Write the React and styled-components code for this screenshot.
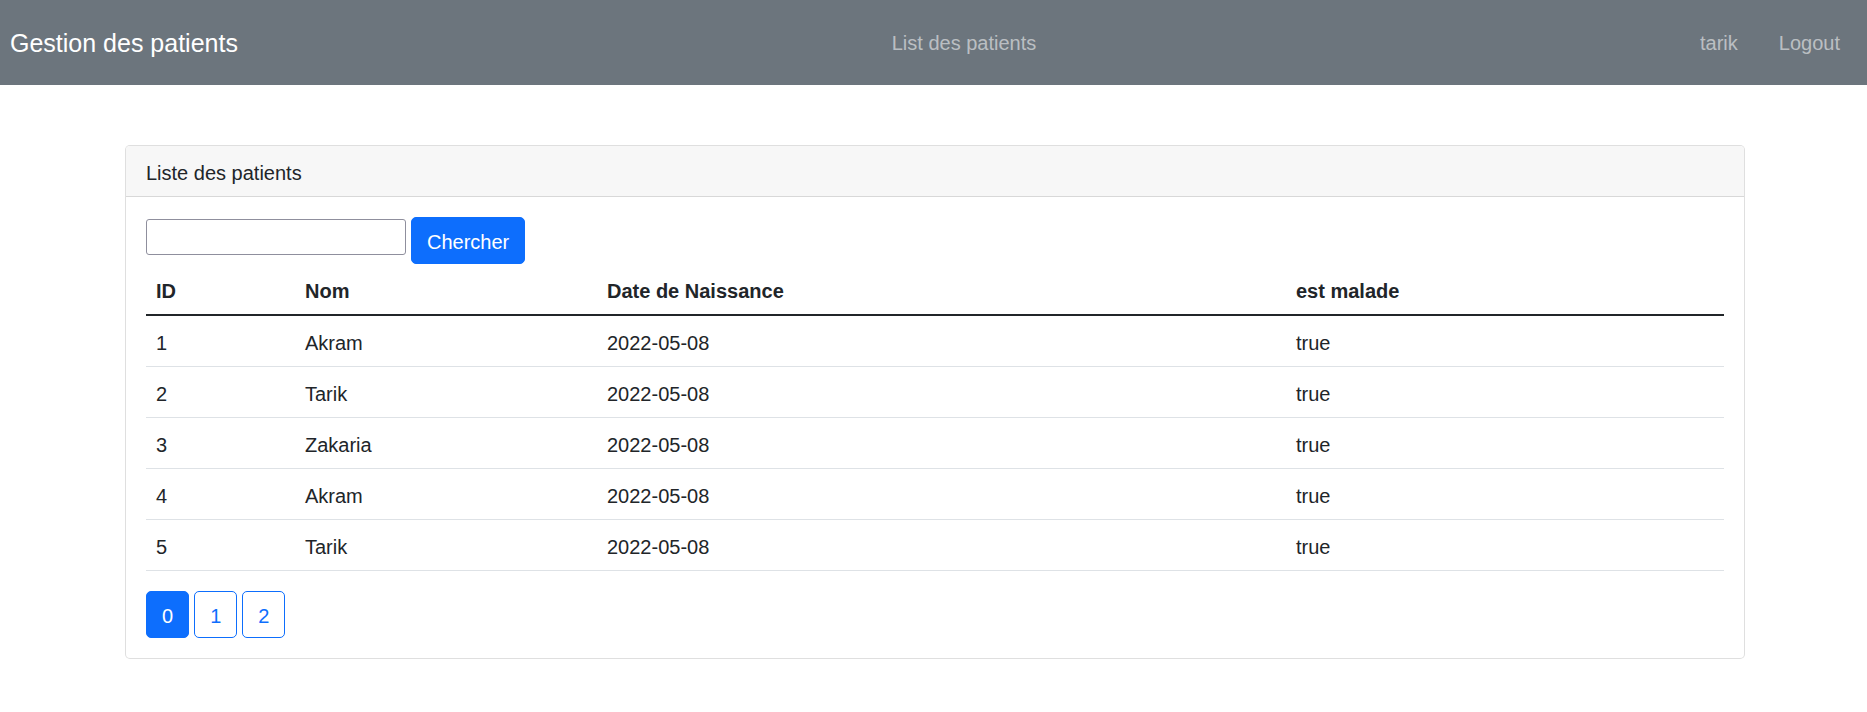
import React, { useState } from 'react'
import styled, { createGlobalStyle } from 'styled-components'

const GlobalStyle = createGlobalStyle`
  html, body {
    margin: 0;
    padding: 0;
    background: #fff;
  }
  body {
    font-family: 'Liberation Sans', Arial, sans-serif;
    font-size: 20px;
    line-height: 30px;
    color: #212529;
  }
  * {
    box-sizing: border-box;
  }
`

const patients = [
  { id: 1, nom: 'Akram', dateNaissance: '2022-05-08', malade: true },
  { id: 2, nom: 'Tarik', dateNaissance: '2022-05-08', malade: true },
  { id: 3, nom: 'Zakaria', dateNaissance: '2022-05-08', malade: true },
  { id: 4, nom: 'Akram', dateNaissance: '2022-05-08', malade: true },
  { id: 5, nom: 'Tarik', dateNaissance: '2022-05-08', malade: true }
]

const pages = [0, 1, 2]

const Navbar = styled.nav`
  display: flex;
  align-items: center;
  height: 85px;
  padding: 0 17px 0 10px;
  background-color: #6c757d;
`

const Brand = styled.a`
  font-size: 25px;
  line-height: 36px;
  color: #fff;
  text-decoration: none;
  white-space: nowrap;
`

const NavList = styled.ul`
  display: flex;
  gap: 21px;
  list-style: none;
  margin: 0 0 0 auto;
  padding: 0;
`

const NavLink = styled.a`
  display: block;
  padding: 0 10px;
  font-size: 20px;
  line-height: 30px;
  color: rgba(255, 255, 255, 0.55);
  text-decoration: none;
  cursor: pointer;
`

const Container = styled.div`
  width: 1620px;
  margin: 60px 122px 0 125px;
`

const Card = styled.div`
  border: 1px solid rgba(0, 0, 0, 0.125);
  border-radius: 5px;
  background: #fff;
  overflow: hidden;
`

const CardHeader = styled.div`
  padding: 12px 20px 8px;
  line-height: 30px;
  background-color: #f7f7f7;
  border-bottom: 1px solid rgba(0, 0, 0, 0.125);
`

const CardBody = styled.div`
  padding: 20px;
`

const SearchForm = styled.form`
  display: flex;
  align-items: flex-start;
  gap: 5px;
`

const SearchInput = styled.input`
  width: 260px;
  height: 36px;
  margin-top: 2px;
  padding: 2px 4px;
  border: 1px solid #8f8f9d;
  border-radius: 3px;
  font-family: inherit;
  font-size: 16px;
  outline: none;
`

const Button = styled.button`
  height: 47px;
  padding: 9px 15px 6px;
  border: 1px solid #0d6efd;
  border-radius: 5px;
  font-family: inherit;
  font-size: 20px;
  line-height: 30px;
  color: ${p => (p.$outline ? '#0d6efd' : '#fff')};
  background-color: ${p => (p.$outline ? '#fff' : '#0d6efd')};
  cursor: pointer;
`

const Table = styled.table`
  width: 100%;
  border-collapse: collapse;
  margin-bottom: 20px;
  table-layout: fixed;
`

const Th = styled.th`
  width: ${p => p.$w}px;
  padding: 12px 10px 8px;
  text-align: left;
  font-weight: bold;
  line-height: 30px;
  border-bottom: 2px solid #212529;
`

const Td = styled.td`
  padding: 12px 10px 8px;
  line-height: 30px;
  border-bottom: 1px solid #dee2e6;
`

const Pagination = styled.div`
  display: flex;
  gap: 5px;
`

export default function App() {
  const [keyword, setKeyword] = useState('')
  const [page, setPage] = useState(0)

  return (
    <>
      <GlobalStyle />
      <Navbar>
        <Brand>Gestion des patients</Brand>
        <NavList>
          <li>
            <NavLink>List des patients</NavLink>
          </li>
        </NavList>
        <NavList>
          <li>
            <NavLink>tarik</NavLink>
          </li>
          <li>
            <NavLink>Logout</NavLink>
          </li>
        </NavList>
      </Navbar>
      <Container>
        <Card>
          <CardHeader>Liste des patients</CardHeader>
          <CardBody>
            <SearchForm onSubmit={e => e.preventDefault()}>
              <SearchInput
                type="text"
                value={keyword}
                onChange={e => setKeyword(e.target.value)}
              />
              <Button type="submit">Chercher</Button>
            </SearchForm>
            <Table>
              <thead>
                <tr>
                  <Th $w={149}>ID</Th>
                  <Th $w={302}>Nom</Th>
                  <Th $w={689}>Date de Naissance</Th>
                  <Th $w={438}>est malade</Th>
                </tr>
              </thead>
              <tbody>
                {patients.map(p => (
                  <tr key={p.id}>
                    <Td>{p.id}</Td>
                    <Td>{p.nom}</Td>
                    <Td>{p.dateNaissance}</Td>
                    <Td>{String(p.malade)}</Td>
                  </tr>
                ))}
              </tbody>
            </Table>
            <Pagination>
              {pages.map(i => (
                <Button
                  key={i}
                  $outline={i !== page}
                  onClick={() => setPage(i)}
                >
                  {i}
                </Button>
              ))}
            </Pagination>
          </CardBody>
        </Card>
      </Container>
    </>
  )
}
